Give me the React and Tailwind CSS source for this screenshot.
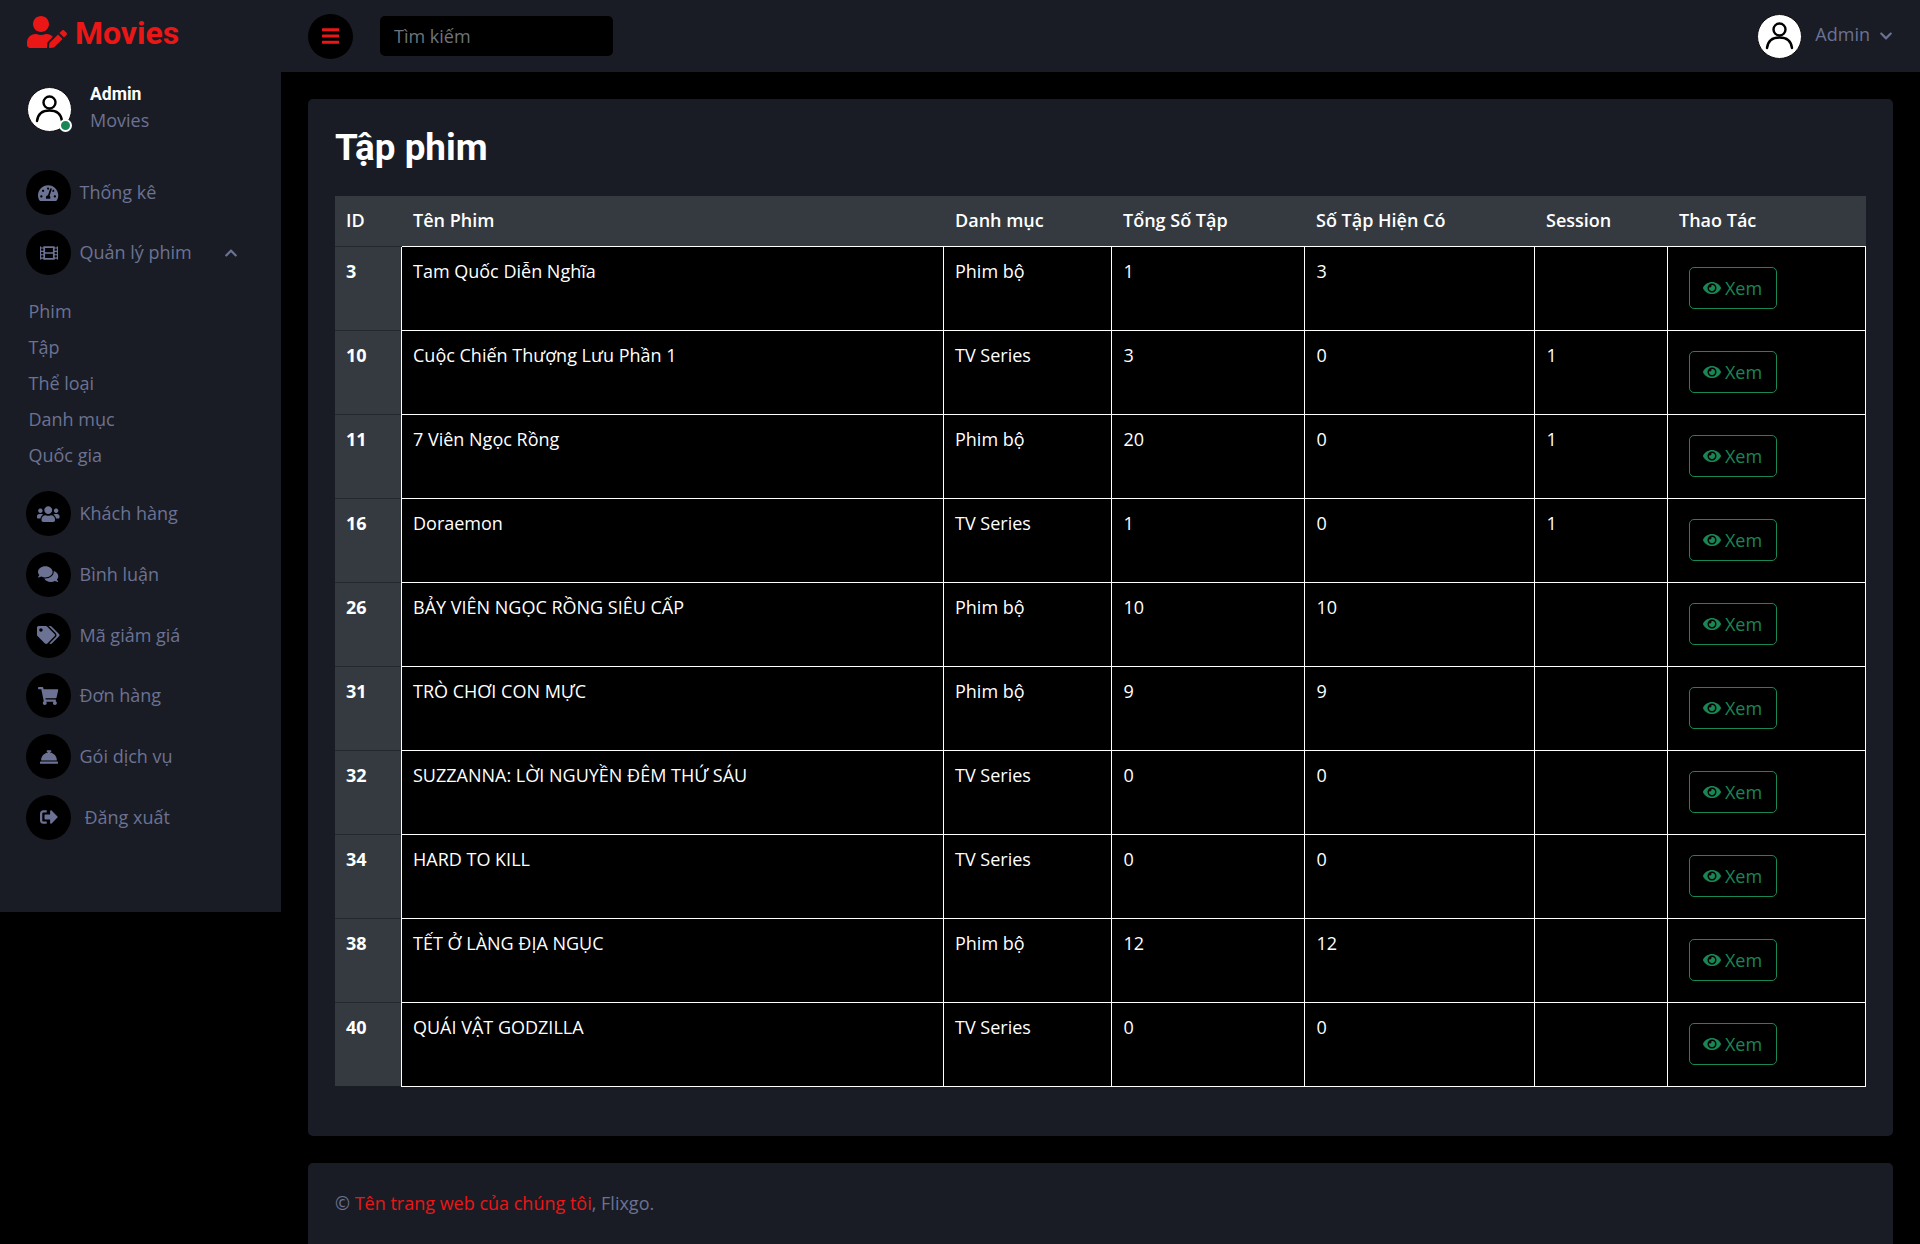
import {
  FaBars,
  FaChevronDown,
  FaChevronUp,
  FaComments,
  FaConciergeBell,
  FaEye,
  FaFilm,
  FaShoppingCart,
  FaSignOutAlt,
  FaTachometerAlt,
  FaTags,
  FaUserEdit,
  FaUsers,
} from "react-icons/fa";

const subItems = ["Phim", "Tập", "Thể loại", "Danh mục", "Quốc gia"];

const lowerItems = [
  { label: "Khách hàng", Icon: FaUsers, size: "w-[22.5px] h-[18px]" },
  { label: "Bình luận", Icon: FaComments, size: "w-[20.25px] h-[18px]" },
  { label: "Mã giảm giá", Icon: FaTags, size: "w-[22.5px] h-[18px]" },
  { label: "Đơn hàng", Icon: FaShoppingCart, size: "w-[20.25px] h-[18px]" },
  { label: "Gói dịch vụ", Icon: FaConciergeBell, size: "w-[18px] h-[18px]" },
  { label: "Đăng xuất", Icon: FaSignOutAlt, size: "w-[18px] h-[18px]", extra: "ml-[5px]" },
];

const rows = [
  { id: 3, name: "Tam Quốc Diễn Nghĩa", cat: "Phim bộ", total: 1, has: 3, session: "" },
  { id: 10, name: "Cuộc Chiến Thượng Lưu Phần 1", cat: "TV Series", total: 3, has: 0, session: 1 },
  { id: 11, name: "7 Viên Ngọc Rồng", cat: "Phim bộ", total: 20, has: 0, session: 1 },
  { id: 16, name: "Doraemon", cat: "TV Series", total: 1, has: 0, session: 1 },
  { id: 26, name: "BẢY VIÊN NGỌC RỒNG SIÊU CẤP", cat: "Phim bộ", total: 10, has: 10, session: "" },
  { id: 31, name: "TRÒ CHƠI CON MỰC", cat: "Phim bộ", total: 9, has: 9, session: "" },
  { id: 32, name: "SUZZANNA: LỜI NGUYỀN ĐÊM THỨ SÁU", cat: "TV Series", total: 0, has: 0, session: "" },
  { id: 34, name: "HARD TO KILL", cat: "TV Series", total: 0, has: 0, session: "" },
  { id: 38, name: "TẾT Ở LÀNG ĐỊA NGỤC", cat: "Phim bộ", total: 12, has: 12, session: "" },
  { id: 40, name: "QUÁI VẬT GODZILLA", cat: "TV Series", total: 0, has: 0, session: "" },
];

const Avatar = () => (
  <svg viewBox="0 0 45 45" className="w-[45px] h-[45px] shrink-0">
    <circle cx="22.5" cy="22.5" r="22" fill="#fff" stroke="#111" strokeWidth="1" />
    <circle cx="22.5" cy="15.5" r="6" fill="none" stroke="#000" strokeWidth="2.4" />
    <path d="M10 34 C11 26 16 23.5 22.5 23.5 C29 23.5 34 26 35 34" fill="none" stroke="#000" strokeWidth="2.4" strokeLinecap="round" />
  </svg>
);

const NavIcon = ({ Icon, size }) => (
  <div className="w-[45px] h-[45px] rounded-full bg-black flex items-center justify-center shrink-0 text-[#6c7293]">
    <Icon className={size} />
  </div>
);

const Sidebar = () => (
  <aside className="w-[281px] h-[912px] bg-[#191c24] shrink-0">
    <div className="h-[72px] pl-[27px] pt-[14px] flex items-start gap-[8px] text-[#eb1616]">
      <FaUserEdit className="w-[40px] h-[32px] mt-[2px] shrink-0" />
      <span className="font-['Roboto'] font-bold text-[32px] leading-[38px]">Movies</span>
    </div>
    <div className="pl-[27px] pt-[15px] flex items-start gap-[18px]">
      <div className="relative">
        <Avatar />
        <span className="absolute right-0 bottom-0 w-[13px] h-[13px] rounded-full bg-[#198754] border-2 border-white" />
      </div>
      <div className="-mt-[5px]">
        <div className="font-['Roboto'] font-bold text-[17.6px] leading-[25px] text-white">Admin</div>
        <div className="text-[#6c7293] leading-[26px]">Movies</div>
      </div>
    </div>
    <nav className="pl-[26px] pt-[37px]">
      <div className="flex items-center gap-[8.5px] h-[45px] mb-[15px]">
        <NavIcon Icon={FaTachometerAlt} size="w-[20.25px] h-[18px]" />
        <span>Thống kê</span>
      </div>
      <div className="flex items-center gap-[8.5px] h-[45px]">
        <NavIcon Icon={FaFilm} size="w-[18px] h-[18px]" />
        <span>Quản lý phim</span>
        <FaChevronUp className="text-[14px] ml-[24px]" />
      </div>
      <div className="pt-[18px] pl-[2.5px] pb-[18px]">
        {subItems.map((item) => (
          <div key={item} className="h-[36px] leading-[36px]">
            {item}
          </div>
        ))}
      </div>
      <div className="flex flex-col gap-[15.8px]">
        {lowerItems.map(({ label, Icon, size, extra }) => (
          <div key={label} className="flex items-center gap-[8.5px] h-[45px]">
            <NavIcon Icon={Icon} size={size} />
            <span className={extra}>{label}</span>
          </div>
        ))}
      </div>
    </nav>
  </aside>
);

const Topbar = () => (
  <header className="h-[72px] bg-[#191c24] flex items-center pl-[27px] pr-[27px]">
    <div className="w-[45px] h-[45px] rounded-full bg-black flex items-center justify-center text-[#eb1616]">
      <FaBars className="w-[17.5px] h-[20px]" />
    </div>
    <div className="ml-[27px] w-[233px] h-[40px] rounded-[5px] bg-black pl-[14px] leading-[40px] text-[#6c757d]">
      Tìm kiếm
    </div>
    <div className="ml-auto flex items-center">
      <Avatar />
      <span className="ml-[13px] -mt-[4px]">Admin</span>
      <FaChevronDown className="ml-[9px] text-[14px]" />
    </div>
  </header>
);

const EpisodeTable = () => (
  <table className="w-[1531px] table-fixed border-collapse text-white">
    <thead>
      <tr className="h-[50px] bg-[#343a40] text-left">
        <th className="w-[66px] px-[11px] font-semibold">ID</th>
        <th className="w-[542px] px-[12px] font-semibold">Tên Phim</th>
        <th className="w-[168px] px-[12px] font-semibold">Danh mục</th>
        <th className="w-[193px] px-[12px] font-semibold">Tổng Số Tập</th>
        <th className="w-[230px] px-[12px] font-semibold">Số Tập Hiện Có</th>
        <th className="w-[133px] px-[12px] font-semibold">Session</th>
        <th className="px-[12px] font-semibold">Thao Tác</th>
      </tr>
    </thead>
    <tbody className="border-t border-white">
      {rows.map((row) => (
        <tr key={row.id} className="h-[84px] align-top">
          <th className="px-[11px] pt-[11px] bg-[#343a40] font-bold text-left border-t border-[#24272c]">{row.id}</th>
          <td className="px-[11.5px] pt-[11px] border border-white bg-black">{row.name}</td>
          <td className="px-[11.5px] pt-[11px] border border-white bg-black">{row.cat}</td>
          <td className="px-[12px] pt-[11px] border border-white bg-black">{row.total}</td>
          <td className="px-[12px] pt-[11px] border border-white bg-black">{row.has}</td>
          <td className="px-[12px] pt-[11px] border border-white bg-black">{row.session}</td>
          <td className="pl-[21px] pt-[20px] border border-white bg-black">
            <div className="w-[88px] h-[42px] rounded-[5px] border border-[#198754] text-[#198754] flex items-center justify-center gap-[4px]">
              <FaEye className="w-[18px] h-[16px]" />
              <span className="mt-[1px]">Xem</span>
            </div>
          </td>
        </tr>
      ))}
    </tbody>
  </table>
);

export default function App() {
  return (
    <div className="flex bg-black h-[1244px] overflow-hidden font-['Open_Sans',sans-serif] text-[18px] text-[#6c7293]">
      <Sidebar />
      <div className="flex-1 min-w-0">
        <Topbar />
        <main className="pt-[27px] px-[27px]">
          <section className="rounded-[5px] bg-[#191c24] p-[27px] pb-[49px]">
            <h1 className="font-['Roboto'] font-bold text-[36.8px] leading-[42px] text-white mb-[27px] mt-[1px]">Tập phim</h1>
            <EpisodeTable />
          </section>
          <footer className="mt-[27px] rounded-t-[5px] bg-[#191c24] p-[27px] h-[120px]">
            © <span className="text-[#eb1616]">Tên trang web của chúng tôi</span>, Flixgo.
          </footer>
        </main>
      </div>
    </div>
  );
}
